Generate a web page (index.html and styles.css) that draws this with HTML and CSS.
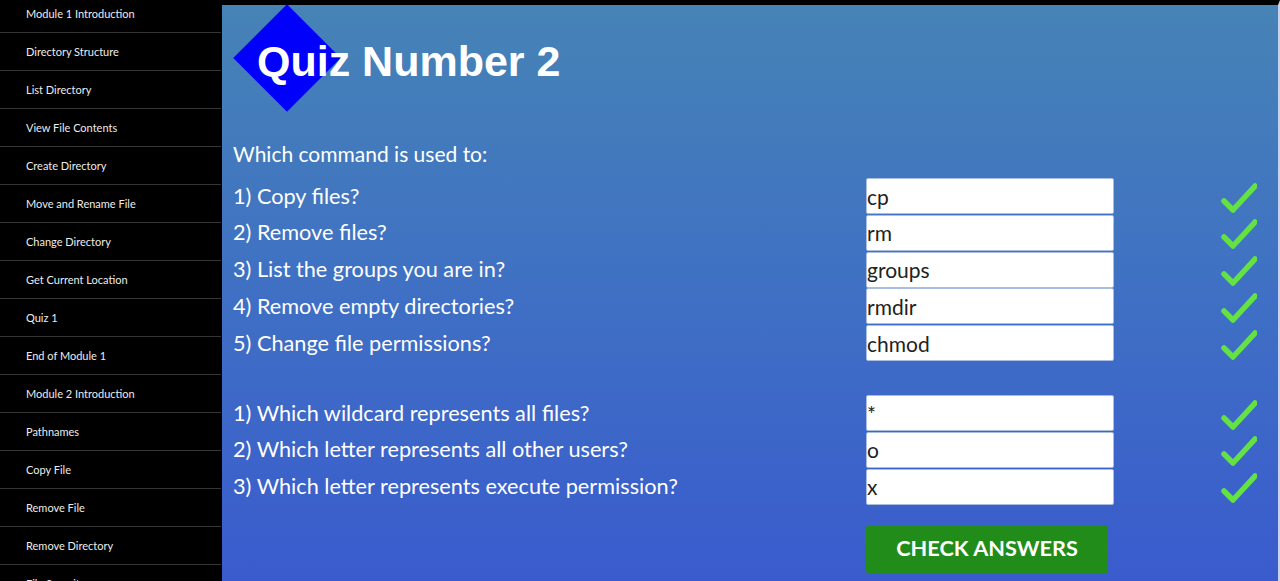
FILE: index.html
```html
<!DOCTYPE html>
<html>
<head>
<meta charset="utf-8">
<link rel="stylesheet" href="styles.css">
</head>
<body>
<nav class="sidebar">
  <ul class="nav-list">
    <li class="nav-item">Module 1 Introduction</li>
    <li class="nav-item">Directory Structure</li>
    <li class="nav-item">List Directory</li>
    <li class="nav-item">View File Contents</li>
    <li class="nav-item">Create Directory</li>
    <li class="nav-item">Move and Rename File</li>
    <li class="nav-item">Change Directory</li>
    <li class="nav-item">Get Current Location</li>
    <li class="nav-item">Quiz 1</li>
    <li class="nav-item">End of Module 1</li>
    <li class="nav-item">Module 2 Introduction</li>
    <li class="nav-item">Pathnames</li>
    <li class="nav-item">Copy File</li>
    <li class="nav-item">Remove File</li>
    <li class="nav-item">Remove Directory</li>
    <li class="nav-item">File Security</li>
  </ul>
</nav>
<main class="main">
  <header class="header">
    <div class="diamond"></div>
    <h1 class="title">Quiz Number 2</h1>
  </header>
  <p class="intro">Which command is used to:</p>
  <div class="quiz-grid">
    <label class="q">1) Copy files?</label><input class="answer" value="cp"><svg class="check" viewBox="0 0 36 32"><path d="M3 19 L12 28 L34 4"/></svg>
    <label class="q">2) Remove files?</label><input class="answer" value="rm"><svg class="check" viewBox="0 0 36 32"><path d="M3 19 L12 28 L34 4"/></svg>
    <label class="q">3) List the groups you are in?</label><input class="answer" value="groups"><svg class="check" viewBox="0 0 36 32"><path d="M3 19 L12 28 L34 4"/></svg>
    <label class="q">4) Remove empty directories?</label><input class="answer" value="rmdir"><svg class="check" viewBox="0 0 36 32"><path d="M3 19 L12 28 L34 4"/></svg>
    <label class="q">5) Change file permissions?</label><input class="answer" value="chmod"><svg class="check" viewBox="0 0 36 32"><path d="M3 19 L12 28 L34 4"/></svg>
  </div>
  <div class="quiz-grid second">
    <label class="q">1) Which wildcard represents all files?</label><input class="answer" value="*"><svg class="check" viewBox="0 0 36 32"><path d="M3 19 L12 28 L34 4"/></svg>
    <label class="q">2) Which letter represents all other users?</label><input class="answer" value="o"><svg class="check" viewBox="0 0 36 32"><path d="M3 19 L12 28 L34 4"/></svg>
    <label class="q">3) Which letter represents execute permission?</label><input class="answer" value="x"><svg class="check" viewBox="0 0 36 32"><path d="M3 19 L12 28 L34 4"/></svg>
  </div>
  <div class="actions">
    <button class="btn">CHECK ANSWERS</button>
  </div>
</main>
</body>
</html>
```
FILE: styles.css
```css
* { box-sizing: border-box; }
html, body { margin: 0; padding: 0; height: 100%; }
body {
  display: flex;
  overflow: hidden;
  background: #000;
  font-family: Lato, "Liberation Sans", sans-serif;
}
.sidebar {
  width: 222px;
  flex: none;
  background: #000;
  height: 581px;
  overflow: hidden;
}
.nav-list {
  list-style: none;
  margin: -5px 0 0 0;
  padding: 0;
  width: 221px;
}
.nav-item {
  height: 38px;
  border-bottom: 1px solid #353535;
  color: #ececec;
  font-size: 11px;
  padding-left: 26px;
  display: flex;
  align-items: center;
}
.main {
  flex: 1;
  height: 581px;
  border-top: 5px solid #000;
  border-right: 2px solid #c9d2ee;
  background: linear-gradient(to bottom, #4683b6 0%, #3f70c4 50%, #3a5bcd 100%);
  padding: 0 0 0 11px;
}
.header {
  position: relative;
  height: 106px;
}
.diamond {
  position: absolute;
  left: 16px;
  top: 15px;
  width: 76px;
  height: 76px;
  background: #0000fb;
  transform: rotate(45deg);
}
.title {
  position: relative;
  margin: 0;
  padding: 35px 0 0 24px;
  font-family: "Liberation Sans", Arial, sans-serif;
  font-weight: bold;
  font-size: 43px;
  line-height: 43px;
  color: #fff;
}
.intro {
  margin: 25px 0 6px 0;
  height: 36px;
  line-height: 36px;
  font-size: 21px;
  color: #fff;
}
.quiz-grid {
  display: grid;
  grid-template-columns: 633px 248px 107px 38px;
  grid-auto-rows: 36px;
  row-gap: 0.75px;
  align-items: center;
}
.quiz-grid.second {
  margin-top: 34px;
}
.q {
  grid-column: 1;
  font-size: 21.7px;
  color: #fff;
  margin-top: -1px;
}
.answer {
  grid-column: 2;
  height: 36px;
  width: 248px;
  margin: 0;
  border: 1px solid #a9bde0;
  border-radius: 2px;
  background: #fff;
  font-family: Lato, "Liberation Sans", sans-serif;
  font-size: 21px;
  color: #222;
  padding: 0;
  outline: none;
}
.check {
  grid-column: 4;
  width: 36px;
  height: 32px;
  margin-top: 3px;
}
.check path {
  fill: none;
  stroke: #64e244;
  stroke-width: 5.5;
  stroke-linecap: round;
  stroke-linejoin: round;
}
.actions {
  margin-top: 21px;
  padding-left: 633px;
}
.btn {
  width: 242px;
  height: 47px;
  border: none;
  border-radius: 2px;
  background: #218c19;
  color: #fff;
  font-family: Lato, "Liberation Sans", sans-serif;
  font-weight: bold;
  font-size: 21.7px;
  padding: 0 0 2px 0;
}
```
